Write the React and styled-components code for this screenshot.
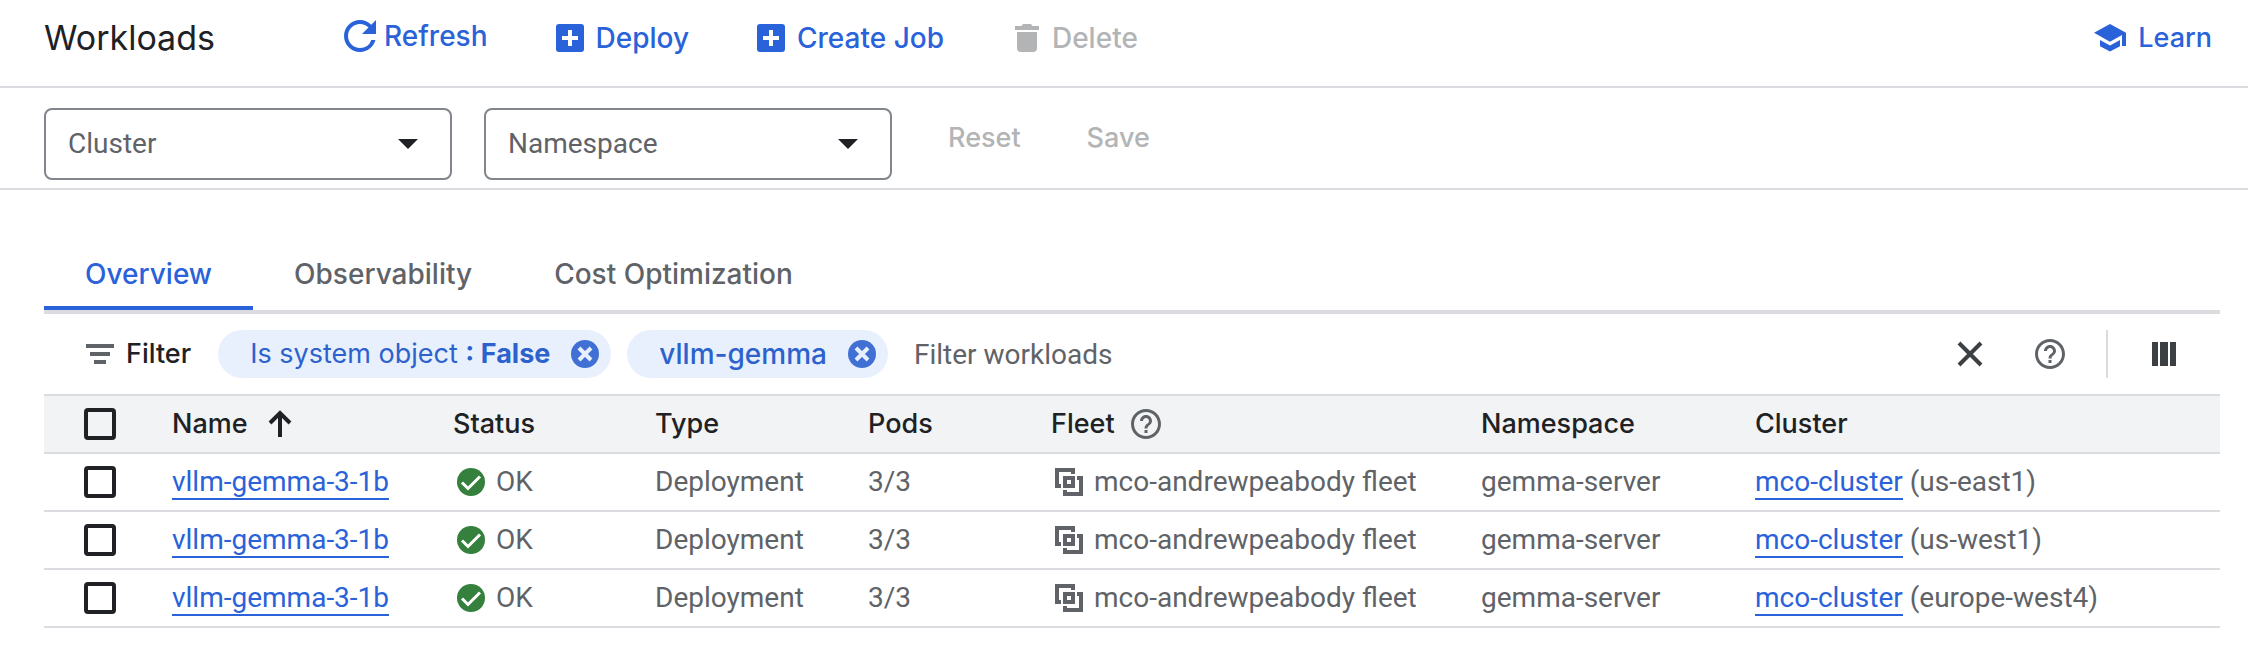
import React, { useState } from "react";
import styled, { createGlobalStyle } from "styled-components";

const brand = `"Google Sans", Inter, "Noto Sans", sans-serif`;
const body = `Roboto, "Liberation Sans", sans-serif`;

const color = {
  blue: "#2962d9",
  chipText: "#2d62cd",
  chipIcon: "#4170d5",
  chipFill: "#e8f0fe",
  ink: "#202124",
  muted: "#5f6368",
  icon: "#3c4043",
  disabled: "#b3b4b6",
  line: "#dadce0",
  header: "#f1f3f4",
  outline: "#80868b",
  green: "#34803c",
};

const GlobalStyle = createGlobalStyle`
  *, *::before, *::after { box-sizing: border-box; }
  body {
    margin: 0;
    background: #fff;
    color: ${color.muted};
    font-family: ${body};
    font-size: 28px;
    line-height: 32px;
  }
  svg { display: block; flex: none; fill: currentColor; }
`;

const TopBar = styled.header`
  display: flex;
  align-items: flex-start;
  padding: 0 36px 0 44px;
  border-bottom: 2px solid ${color.line};
`;

const Title = styled.h1`
  flex: none;
  margin: 0;
  width: 300px;
  color: ${color.ink};
  font: 400 34px/76px ${brand};
`;

const Actions = styled.div`
  display: flex;
  flex: 1;
  align-items: flex-start;
  gap: 68px;
  height: 86px;
  button { font-size: 28px; }
`;

const TextButton = styled.button`
  display: inline-flex;
  align-items: center;
  gap: ${(p) => (p.$large ? 8 : 12)}px;
  height: ${(p) => (p.$large ? 72 : 76)}px;
  padding: 0;
  border: 0;
  background: none;
  color: ${color.blue};
  font: 500 27px/32px ${brand};
  white-space: nowrap;
  text-decoration: none;
  cursor: pointer;
  &:disabled { color: ${color.disabled}; cursor: default; }
`;

const Scope = styled.section`
  display: flex;
  align-items: flex-start;
  gap: 32px;
  padding: 20px 44px 8px;
  border-bottom: 2px solid ${color.line};
`;

const SelectBox = styled.label`
  position: relative;
  width: 408px;
  svg { position: absolute; right: 34px; top: 31px; color: ${color.ink}; pointer-events: none; }
`;

const Select = styled.select`
  display: block;
  width: 100%;
  height: 72px;
  padding: 0 64px 0 22px;
  appearance: none;
  border: 2px solid ${color.outline};
  border-radius: 8px;
  background: #fff;
  color: ${color.muted};
  font: 400 28px/32px ${body};
`;

const ScopeActions = styled.div`
  display: flex;
  gap: 66px;
  padding-left: 24px;
  button { height: 60px; }
`;

const Main = styled.main`
  padding: 48px 28px 20px 44px;
`;

const Tabs = styled.div`
  display: flex;
  border-bottom: 4px solid ${color.line};
`;

const Tab = styled.button`
  height: 72px;
  padding: 3px 41px 0;
  border: 0;
  border-bottom: 4px solid ${(p) => (p.$active ? color.blue : "transparent")};
  background: none;
  color: ${(p) => (p.$active ? color.blue : color.muted)};
  font: 500 28px/32px ${brand};
  cursor: pointer;
`;

const FilterBar = styled.div`
  display: flex;
  align-items: center;
  height: 80px;
  padding-left: 42px;
`;

const FilterLabel = styled.label`
  display: flex;
  align-items: center;
  gap: 12px;
  margin-right: 27px;
  color: ${color.muted};
  span { color: ${color.ink}; font: 500 27px/32px ${brand}; }
`;

const Chip = styled.span`
  display: flex;
  align-items: center;
  gap: 21px;
  height: 48px;
  margin-right: 16px;
  padding: 0 12px 0 32px;
  border-radius: 24px;
  background: ${color.chipFill};
  color: ${color.chipText};
  font: ${(p) => (p.$strong ? "500 28px" : "400 27px")}/32px ${brand};
  white-space: nowrap;
  b { font-weight: 700; }
`;

const IconButton = styled.button`
  display: flex;
  align-items: center;
  justify-content: center;
  padding: 0;
  border: 0;
  background: none;
  color: ${(p) => p.$color || color.icon};
  cursor: pointer;
`;

const FilterInput = styled.input`
  flex: 1;
  min-width: 0;
  height: 48px;
  padding: 0 10px;
  border: 0;
  outline: 0;
  background: none;
  color: ${color.ink};
  font: 400 28px/32px ${body};
  &::placeholder { color: ${color.muted}; opacity: 1; }
`;

const Tools = styled.div`
  display: flex;
  align-items: center;
  gap: 44px;
  padding-right: 44px;
`;

const ToolGroup = styled.div`
  display: flex;
  align-items: center;
  gap: 52px;
  height: 48px;
  padding-right: 41px;
  border-right: 2px solid ${color.line};
`;

const Table = styled.table`
  width: 100%;
  table-layout: fixed;
  border-collapse: separate;
  border-spacing: 0;
  border-top: 2px solid ${color.line};
`;

const Col = styled.col`
  width: ${(p) => (p.$w ? `${p.$w}px` : "auto")};
`;

const HeadCell = styled.th`
  height: 58px;
  padding: 0;
  border-bottom: 2px solid ${color.line};
  background: ${color.header};
  color: ${color.ink};
  font: 500 27px/32px ${brand};
  text-align: left;
  white-space: nowrap;
`;

const Cell = styled.td`
  height: 58px;
  padding: 0;
  border-bottom: 2px solid ${color.line};
  white-space: nowrap;
`;

const Inline = styled.div`
  display: flex;
  align-items: center;
  gap: ${(p) => p.$gap || 11}px;
  padding-left: ${(p) => p.$indent || 0}px;
`;

const Check = styled.input`
  display: block;
  width: 32px;
  height: 32px;
  margin: 0 0 0 40px;
  appearance: none;
  border: 4px solid ${color.ink};
  border-radius: 4px;
  &:checked { background: ${color.ink}; }
`;

const Link = styled.a`
  display: inline-block;
  margin-top: 2px;
  border-bottom: 2px solid ${color.blue};
  color: ${color.blue};
  text-decoration: none;
`;

const RefreshIcon = () => (
  <svg width="32" height="32" viewBox="4 4 16 16" aria-hidden="true">
    <path d="M17.65 6.35A7.96 7.96 0 0 0 12 4c-4.42 0-7.99 3.58-7.99 8s3.57 8 7.99 8c3.73 0 6.84-2.55 7.73-6h-2.08A5.99 5.99 0 0 1 12 18c-3.31 0-6-2.69-6-6s2.69-6 6-6c1.66 0 3.14.69 4.22 1.78L13 11h7V4l-2.35 2.35z" />
  </svg>
);

const AddBoxIcon = () => (
  <svg width="28" height="28" viewBox="0 0 28 28" aria-hidden="true">
    <rect width="28" height="28" rx="3" />
    <path d="M12 6h4v6h6v4h-6v6h-4v-6H6v-4h6z" fill="#fff" />
  </svg>
);

const TrashIcon = () => (
  <svg width="28" height="28" viewBox="-3 0 28 28" aria-hidden="true">
    <path d="M0 2h6.500l1.500-2h8l1.500 2H24v4H0z" />
    <path d="M2 8h20v16a4 4 0 0 1-4 4H6a4 4 0 0 1-4-4z" />
  </svg>
);

const SchoolIcon = () => (
  <svg width="32" height="28" viewBox="0 0 32 28" aria-hidden="true">
    <path d="M16 0L0 8.700l16 9 12-6.700v11h4V8.700z" />
    <path d="M6 16v6.300l10 5.300 10-5.300V16l-10 5.500z" />
  </svg>
);

const ArrowDownIcon = () => (
  <svg width="20" height="10" viewBox="0 0 20 10" aria-hidden="true">
    <path d="M0 0h20L10 10z" />
  </svg>
);

const FilterIcon = () => (
  <svg width="28" height="20" viewBox="0 0 28 20" aria-hidden="true">
    <path d="M0 0h28v4H0zM4 8h20v4H4zM8 16h12v4H8z" />
  </svg>
);

const CancelIcon = () => (
  <svg width="28" height="28" viewBox="0 0 28 28" aria-hidden="true">
    <circle cx="14" cy="14" r="14" />
    <path d="M8 8l12 12M20 8L8 20" stroke={color.chipFill} strokeWidth="4" />
  </svg>
);

const CloseIcon = () => (
  <svg width="26" height="26" viewBox="0 0 26 26" aria-hidden="true">
    <path d="M2 2l22 22M24 2L2 24" stroke="currentColor" strokeWidth="4" />
  </svg>
);

const HelpIcon = () => (
  <svg width="30" height="30" viewBox="2 2 20 20" aria-hidden="true">
    <path d="M11 18h2v-2h-2v2zm1-16C6.480 2 2 6.480 2 12s4.480 10 10 10 10-4.480 10-10S17.520 2 12 2zm0 18c-4.410 0-8-3.590-8-8s3.590-8 8-8 8 3.590 8 8-3.590 8-8 8zm0-14c-2.210 0-4 1.790-4 4h2c0-1.100.900-2 2-2s2 .900 2 2c0 2-3 1.750-3 5h2c0-2.250 3-2.500 3-5 0-2.210-1.790-4-4-4z" />
  </svg>
);

const ColumnsIcon = () => (
  <svg width="24" height="24" viewBox="0 0 24 24" aria-hidden="true">
    <path d="M0 0h6v24H0zM8 0h8v24H8zM18 0h6v24h-6z" />
  </svg>
);

const SortIcon = () => (
  <svg width="24" height="28" viewBox="0 0 24 28" aria-hidden="true">
    <path d="M12 27V3M2 13L12 3l10 10" fill="none" stroke="currentColor" strokeWidth="4" />
  </svg>
);

const OkIcon = () => (
  <svg width="28" height="28" viewBox="0 0 28 28" aria-hidden="true">
    <circle cx="14" cy="14" r="14" fill={color.green} />
    <path d="M5 14.500l6 6L23 8.500" fill="none" stroke="#fff" strokeWidth="3" />
  </svg>
);

const FleetIcon = () => (
  <svg width="28" height="28" viewBox="0 0 28 28" aria-hidden="true">
    <path d="M0 0h20v6h-4V4H4v12h2v4H0z" />
    <path d="M28 28H8v-6h4v2h12V12h-2V8h6z" />
    <path fillRule="evenodd" d="M8 8h12v12H8zM12 12v4h4v-4z" />
  </svg>
);

const columns = [128, 281, 202, 213, 183, 430, 274, null];
const tabs = ["Overview", "Observability", "Cost Optimization"];
const workloads = [
  { name: "vllm-gemma-3-1b", region: "us-east1" },
  { name: "vllm-gemma-3-1b", region: "us-west1" },
  { name: "vllm-gemma-3-1b", region: "europe-west4" },
];

export default function App() {
  const [tab, setTab] = useState(0);
  return (
    <>
      <GlobalStyle />
      <TopBar>
        <Title>Workloads</Title>
        <Actions>
          <TextButton $large><RefreshIcon />Refresh</TextButton>
          <TextButton><AddBoxIcon />Deploy</TextButton>
          <TextButton><AddBoxIcon />Create Job</TextButton>
          <TextButton disabled><TrashIcon />Delete</TextButton>
        </Actions>
        <TextButton as="a" href="#learn"><SchoolIcon />Learn</TextButton>
      </TopBar>
      <Scope>
        {["Cluster", "Namespace"].map((label) => (
          <SelectBox key={label}>
            <Select aria-label={label}>
              <option>{label}</option>
            </Select>
            <ArrowDownIcon />
          </SelectBox>
        ))}
        <ScopeActions>
          <TextButton disabled>Reset</TextButton>
          <TextButton disabled>Save</TextButton>
        </ScopeActions>
      </Scope>
      <Main>
        <Tabs role="tablist">
          {tabs.map((name, i) => (
            <Tab key={name} role="tab" aria-selected={i === tab} $active={i === tab} onClick={() => setTab(i)}>
              {name}
            </Tab>
          ))}
        </Tabs>
        <FilterBar>
          <FilterLabel htmlFor="filter"><FilterIcon /><span>Filter</span></FilterLabel>
          <Chip>
            <span>Is system object <b>: False</b></span>
            <IconButton $color={color.chipIcon} aria-label="Remove system object filter"><CancelIcon /></IconButton>
          </Chip>
          <Chip $strong>
            <span>vllm-gemma</span>
            <IconButton $color={color.chipIcon} aria-label="Remove vllm-gemma filter"><CancelIcon /></IconButton>
          </Chip>
          <FilterInput id="filter" placeholder="Filter workloads" />
          <Tools>
            <ToolGroup>
              <IconButton aria-label="Clear filters"><CloseIcon /></IconButton>
              <IconButton $color={color.muted} aria-label="Help"><HelpIcon /></IconButton>
            </ToolGroup>
            <IconButton aria-label="Column display options"><ColumnsIcon /></IconButton>
          </Tools>
        </FilterBar>
        <Table>
          <colgroup>
            {columns.map((w, i) => <Col key={i} $w={w} />)}
          </colgroup>
          <thead>
            <tr>
              <HeadCell><Check type="checkbox" aria-label="Select all workloads" /></HeadCell>
              <HeadCell><Inline $gap={20}>Name<SortIcon /></Inline></HeadCell>
              <HeadCell>Status</HeadCell>
              <HeadCell>Type</HeadCell>
              <HeadCell>Pods</HeadCell>
              <HeadCell>
                <Inline $gap={16}>
                  Fleet
                  <IconButton $color={color.muted} aria-label="About fleets"><HelpIcon /></IconButton>
                </Inline>
              </HeadCell>
              <HeadCell>Namespace</HeadCell>
              <HeadCell>Cluster</HeadCell>
            </tr>
          </thead>
          <tbody>
            {workloads.map((w) => (
              <tr key={w.region}>
                <Cell><Check type="checkbox" aria-label={`Select ${w.name} in ${w.region}`} /></Cell>
                <Cell><Link href="#workload">{w.name}</Link></Cell>
                <Cell><Inline $indent={4}><OkIcon />OK</Inline></Cell>
                <Cell>Deployment</Cell>
                <Cell>3/3</Cell>
                <Cell><Inline $indent={4}><FleetIcon />mco-andrewpeabody fleet</Inline></Cell>
                <Cell>gemma-server</Cell>
                <Cell><Link href="#cluster">mco-cluster</Link> ({w.region})</Cell>
              </tr>
            ))}
          </tbody>
        </Table>
      </Main>
    </>
  );
}
